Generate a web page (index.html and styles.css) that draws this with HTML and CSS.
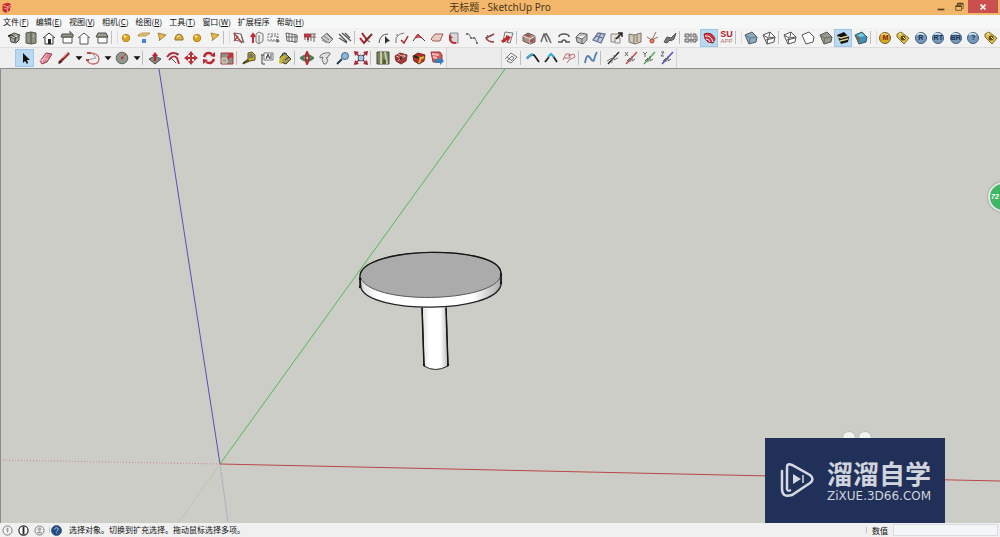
FILE: index.html
```html
<!DOCTYPE html>
<html lang="zh-CN">
<head>
<meta charset="utf-8">
<title>无标题 - SketchUp Pro</title>
<link rel="stylesheet" href="styles.css">
</head>
<body>
<svg class="defs" aria-hidden="true">
<symbol id="iso" viewBox="0 0 14 14"><path d="M1 5l6-3 6 2-5 4zM3 6l1 5 5 1 3-3V5" fill="#a5aa9a" stroke="#44483e"/><path d="M1 5l4-1 4 3M8 8v3" stroke="#222" fill="none"/></symbol>
<symbol id="topv" viewBox="0 0 14 14"><path d="M2 2l5-1 5 1v10l-5 1-5-1z" fill="#8f9585" stroke="#55594d"/><path d="M7 1v12" stroke="#4d5147"/><path d="M9 5h1" stroke="#eee"/></symbol>
<symbol id="front" viewBox="0 0 14 14"><path d="M1 7l6-5 6 5M3 6v7h8V6" fill="#fff" stroke="#333"/><path d="M6 8h3v5H6z" fill="#222"/></symbol>
<symbol id="right" viewBox="0 0 14 14"><path d="M3 6h9v6H3z" fill="#fff" stroke="#555"/><path d="M2 3h11v3H1z" fill="#969b8e" stroke="#4b4f46"/><path d="M9 1h2v2" stroke="#444" fill="none"/></symbol>
<symbol id="back" viewBox="0 0 14 14"><path d="M1 7l6-5 6 5M3 6v7h8V6" fill="#fff" stroke="#555"/></symbol>
<symbol id="left" viewBox="0 0 14 14"><path d="M3 6h9v6H3z" fill="#fff" stroke="#555"/><path d="M3 2h8l2 4H1z" fill="#989d90" stroke="#4b4f46"/></symbol>
<symbol id="ball" viewBox="0 0 14 14"><circle cx="7" cy="7" r="3.700" fill="#dca526" stroke="#ba8519"/><circle cx="6" cy="5.500" r="1.300" fill="#ffeaa0"/></symbol>
<symbol id="plane" viewBox="0 0 14 14"><path d="M1 4l4-2h8l-4 3H1z" fill="#dec176" stroke="#ba9c4e"/><path d="M5 8h4v4H5z" fill="#4c7eda"/></symbol>
<symbol id="spot" viewBox="0 0 14 14"><path d="M3 2l8 2-6 5z" fill="#e4b954" stroke="#ad8532"/><path d="M5 8l-1 2" stroke="#a98332"/></symbol>
<symbol id="dome" viewBox="0 0 14 14"><path d="M3 9V7q1-4 4-4t4 4v2z" fill="#d9ae45" stroke="#907029"/><path d="M5 6q1-2 3-1" stroke="#fff0b4" fill="none"/></symbol>
<symbol id="red1" viewBox="0 0 14 14"><path d="M2 2l7 1 2 8-8-2zM9 3l3 9" fill="none" stroke="#666"/><path d="M2 2l8 10M2 10l4-5" stroke="#b34444" stroke-width="1.500"/></symbol>
<symbol id="red2" viewBox="0 0 14 14"><path d="M6 3l3-2 4 2v7l-4 3-3-2zM9 4v8" fill="#eee" stroke="#777"/><path d="M3 12V4M1 6l2-3 2 3" stroke="#bc2a32" stroke-width="2" fill="none"/></symbol>
<symbol id="tile" viewBox="0 0 14 14"><path d="M1 3h10v7H1zM4 5h6v4H4z" fill="none" stroke="#777" stroke-dasharray="2 1"/><path d="M9 8l4 2-3 2z" fill="#666"/></symbol>
<symbol id="bars" viewBox="0 0 14 14"><path d="M1 2l11 2v7L2 10zM4 3v7M7 3v7M10 4v8M1 6h12" fill="none" stroke="#666"/></symbol>
<symbol id="rbars" viewBox="0 0 14 14"><path d="M1 3h12M2 3v6M5 3v8M8 3v7M11 3v8M1 6h12" stroke="#666"/><path d="M1 3h7v3H1zM4 6h2v3H4z" fill="#bd343c"/></symbol>
<symbol id="slats" viewBox="0 0 14 14"><path d="M1 7l6-5 6 6-4 4zM2 9l5 3M4 5l5 4M7 3l5 5" fill="#ccc" stroke="#777"/></symbol>
<symbol id="slats2" viewBox="0 0 14 14"><path d="M1 3l8 8M4 2l9 8M1 7l8 5M7 2l5 5" stroke="#555" stroke-width="1.300"/></symbol>
<symbol id="cut" viewBox="0 0 14 14"><path d="M3 2l5 7M1 7l4 5 8-9" stroke="#a52226" stroke-width="2" fill="none"/><path d="M6 9l7-6M8 9l3 2" stroke="#444"/></symbol>
<symbol id="curve" viewBox="0 0 14 14"><path d="M2 12Q3 3 11 3" stroke="#555" fill="none"/><path d="M8 5l5 5-3 1-2 2z" fill="#333"/></symbol>
<symbol id="fillet" viewBox="0 0 14 14"><path d="M1 12V7q3-5 8-5M1 4h2" stroke="#777" fill="none"/><path d="M6 9l3 3 4-7" stroke="#a7252b" fill="none" stroke-width="1.500"/></symbol>
<symbol id="roof" viewBox="0 0 14 14"><path d="M1 10l5-7 7 7" stroke="#333" fill="none"/><path d="M3 7l3-4 4 4-3-1z" fill="#d65461" stroke="#b22f3b"/></symbol>
<symbol id="face" viewBox="0 0 14 14"><path d="M1 8l4-5h8l-3 7H3z" fill="#e5cdc4" stroke="#a35b57"/></symbol>
<symbol id="push2" viewBox="0 0 14 14"><path d="M3 2h8v10H5z" fill="#d7d7d7" stroke="#888"/><path d="M2 3l4 4H4v2q1 2 5 2v2q-7 0-7-5z" fill="#c72d36"/></symbol>
<symbol id="chain" viewBox="0 0 14 14"><path d="M1 3h3l2 4h4l2 5" stroke="#777" fill="none"/><path d="M1 2h2v2H1zM5 6h2v2H5zM8 6h2v2H8zM11 11h2v2h-2z" fill="#777"/></symbol>
<symbol id="anglei" viewBox="0 0 14 14"><path d="M11 3L3 7q2 4 8 4" stroke="#9d3438" fill="none" stroke-width="1.500"/><path d="M3 7l2-3" stroke="#555"/></symbol>
<symbol id="redsheet" viewBox="0 0 14 14"><path d="M5 1l8 1-3 10-7-2z" fill="#eee" stroke="#777"/><path d="M1 10l5-4V4l5 2-4 6V9l-4 3z" fill="#c12a2c"/></symbol>
<symbol id="box" viewBox="0 0 14 14"><path d="M1 5l5-3 7 3v6l-5 2-7-3z" fill="#a99083" stroke="#635b53"/><path d="M1 5l7 3 5-3M8 8v5" stroke="#ddd" fill="none"/><path d="M8 9l4-2v3l-4 2zM3 4l4-1 2 2-3 1z" fill="#aa4c46"/></symbol>
<symbol id="legs" viewBox="0 0 14 14"><path d="M2 11l3-8 3 1 4 8M5 3l3 8M7 2l4 7" fill="none" stroke="#696969" stroke-width="1.500"/></symbol>
<symbol id="arch" viewBox="0 0 14 14"><path d="M2 6q0-3 5-3t5 3M1 11h4q0-2 2-2t2 2h4" fill="none" stroke="#555" stroke-width="1.500"/></symbol>
<symbol id="hex" viewBox="0 0 14 14"><path d="M1 6l4-4 7 1v6l-4 4-6-2zM1 6l6 2 5-4M7 8v5" fill="#bbb" stroke="#666"/></symbol>
<symbol id="sheets" viewBox="0 0 14 14"><path d="M1 9l5-7 7 1-4 9zM4 5l7 2M9 2l-4 9" fill="#c3cbdf" stroke="#657392" stroke-width="1.300"/></symbol>
<symbol id="export" viewBox="0 0 14 14"><path d="M1 3h8v8H1z" fill="#e9e2d5" stroke="#888"/><path d="M5 7h5v5H5z" fill="#eee" stroke="#888"/><path d="M6 8l6-6M8 2h4v4" stroke="#222" stroke-width="1.500" fill="none"/></symbol>
<symbol id="book" viewBox="0 0 14 14"><path d="M1 3l5 1 7-2v9l-6 2-6-2zM6 4v8M9 4v7" fill="#d2c8b5" stroke="#77736a"/></symbol>
<symbol id="joint" viewBox="0 0 14 14"><path d="M2 6l5 3 4-8M7 9l6-3" stroke="#95715c" fill="none"/><circle cx="7" cy="10" r="2" fill="#ec8060" stroke="#a64631"/></symbol>
<symbol id="feather" viewBox="0 0 14 14"><path d="M1 11l3-5 4 1 5-5-2 6-3 2-1-1-3 3z" fill="#777" stroke="#555"/></symbol>
<symbol id="gear3" viewBox="0 0 14 14"><path d="M1 3h4v3H1zM1 8h4v3H1zM7 2v10M9 3h3v3H9zM9 8h3v3H9zM5 4h2M5 9h4M13 5v5" stroke="#666" fill="#ccc"/></symbol>
<symbol id="wifi" viewBox="0 0 14 14"><path d="M2 3q8-3 11 5l-2 4-5-1Q2 8 2 3z" fill="#d32e3c" stroke="#912530"/><path d="M3 5q6-1 8 6M4 8q3 0 4 3" stroke="#fff" fill="none"/></symbol>
<symbol id="cube" viewBox="0 0 14 14"><path d="M1 4l7-3 5 5-1 5-7 2z" fill="#8caabd" stroke="#4c5960"/><path d="M1 4l5 3 7-1M6 7l-1 6" stroke="#5e7a8b" fill="none"/></symbol>
<symbol id="wire" viewBox="0 0 14 14"><path d="M1 4l7-3 5 5-1 5-7 2zM1 4l5 3 7-1M6 7l-1 6M8 1l-1 5M4 9l8-2" fill="#fff" stroke="#555"/></symbol>
<symbol id="white" viewBox="0 0 14 14"><path d="M1 4l7-3 5 5-1 5-7 2z" fill="#fff" stroke="#555"/></symbol>
<symbol id="shade" viewBox="0 0 14 14"><path d="M1 4l7-3 5 5-1 5-7 2z" fill="#99998b" stroke="#555"/><path d="M1 4l5 3 7-1M6 7l-1 6" stroke="#706f60" fill="none"/></symbol>
<symbol id="stripe" viewBox="0 0 14 14"><path d="M1 4l7-3 5 5-1 5-7 2z" fill="#111"/><path d="M2 6l3 1 7-2M4 10l8-2" stroke="#d8cf8b" stroke-width="1.500" fill="none"/></symbol>
<symbol id="multi" viewBox="0 0 14 14"><path d="M1 4l7-3 5 5-1 5-7 2z" fill="#3d92b7" stroke="#44565e"/><path d="M1 4l5 3-1 6z" fill="#746c57"/><path d="M3 4l5-2 3 3-5 1z" fill="#76c8e0"/></symbol>
<symbol id="gold" viewBox="0 0 14 14"><circle cx="7" cy="7" r="5.500" fill="#d4aa28" stroke="#79601c"/><path d="M3 4q3-3 7 0" stroke="#fff09b" fill="none"/></symbol>
<symbol id="tag" viewBox="0 0 14 14"><path d="M1 3l4-2 8 6-5 6-7-7z" fill="#dcbc4e" stroke="#86712d"/><circle cx="7" cy="7" r="2.500" fill="#684b10"/><path d="M3 3h2M7 6l2 2" stroke="#fff"/></symbol>
<symbol id="blue" viewBox="0 0 14 14"><circle cx="7" cy="7" r="5.500" fill="#7799bb" stroke="#415f7e"/><path d="M3 4q3-3 7 0" stroke="#dcecf6" fill="none" stroke-width="1.500"/></symbol>
<symbol id="select" viewBox="0 0 14 14"><path d="M5 2v10l2-2 2 3 1-1-1-3h3z" fill="#111"/></symbol>
<symbol id="eraser" viewBox="0 0 14 14"><path d="M1 10l6-8 6 1-5 8-5 2z" fill="#df8290" stroke="#8c4251"/><path d="M3 12l1-4 4-5M1 10l3-2 5 0" stroke="#fac4ca" fill="none"/></symbol>
<symbol id="pencil" viewBox="0 0 14 14"><path d="M2 12L12 2" stroke="#922d27" stroke-width="2.500"/><path d="M1 13l2-4 2 2z" fill="#322"/><path d="M6 7l5-5" stroke="#df7f6c"/></symbol>
<symbol id="arc" viewBox="0 0 14 14"><path d="M3 2q10 0 10 6 0 5-6 5-4 0-6-4" fill="none" stroke="#c16765" stroke-width="1.300"/><path d="M1 9l9-2M7 3l3 4" stroke="#999"/><path d="M0 9h3M1 2h4" stroke="#b74b45" stroke-width="2"/></symbol>
<symbol id="circle" viewBox="0 0 14 14"><circle cx="7" cy="7" r="5.800" fill="#92968b" stroke="#62655c"/><path d="M7 7l4-4" stroke="#bd3e3a"/><circle cx="7" cy="7" r="1.200" fill="#a83434"/></symbol>
<symbol id="down" viewBox="0 0 14 14"><path d="M1 4h12L7 11z" fill="#111"/></symbol>
<symbol id="push" viewBox="0 0 14 14"><path d="M1 8l6-3 6 3-6 5z" fill="#85887a" stroke="#4c4d46"/><path d="M7 1l3 4H8v5H6V5H4z" fill="#ba202e"/></symbol>
<symbol id="offset" viewBox="0 0 14 14"><path d="M1 6Q6-1 12 4M3 9q4-6 8-2l2 6" fill="none" stroke="#b12733" stroke-width="1.800"/><path d="M4 6l6 6M10 2l3 1" stroke="#555"/></symbol>
<symbol id="move" viewBox="0 0 14 14"><path d="M7 0l3 4H8v2h2V4l4 3-4 3V8H8v2h2l-3 4-3-4h2V8H4v2L0 7l4-3v2h2V4H4z" fill="#b92f38"/></symbol>
<symbol id="rotate" viewBox="0 0 14 14"><path d="M2 6q2-6 8-3M12 8q-2 6-8 3" fill="none" stroke="#ba2630" stroke-width="2.500"/><path d="M8 5l5 1V1zM6 9l-5-1v5z" fill="#ba2630"/></symbol>
<symbol id="scale" viewBox="0 0 14 14"><path d="M1 2h12v11H1z" fill="#918f83" stroke="#aa3439"/><path d="M7 2h6v6l-2-2-3 3-2-2 3-3z" fill="#bd3438"/><path d="M2 7h5v5H2z" fill="#aaa99f" stroke="#d9d7cd"/></symbol>
<symbol id="tape" viewBox="0 0 14 14"><path d="M1 12l5-4V2l4-1 3 3v5l-5 1-7 3z" fill="#caae2b" stroke="#5b5328"/><circle cx="9" cy="5" r="2.500" fill="#777965"/><path d="M1 12l6-3" stroke="#242424"/></symbol>
<symbol id="text" viewBox="0 0 14 14"><path d="M4 2h9v7H4z" fill="#fff" stroke="#777"/><path d="M2 4v9h3M1 4h3M6 8l2-5 2 5M6 6h3M11 3v5" fill="none" stroke="#444"/></symbol>
<symbol id="paint" viewBox="0 0 14 14"><path d="M2 6l5-4 6 6-5 5-5-2z" fill="#a39b59" stroke="#424127"/><path d="M1 12q0-8 7-7l-3 3-1 5z" fill="#c8b729"/><path d="M4 5q0-5 5-2M7 9l4-3" fill="none" stroke="#333"/></symbol>
<symbol id="orbit" viewBox="0 0 14 14"><path d="M1 7q6-5 12 0-6 5-12 0z" fill="none" stroke="#3d8356" stroke-width="2.500"/><path d="M7 1q-3 6 0 12Q11 7 7 1z" fill="none" stroke="#b32e34" stroke-width="2"/></symbol>
<symbol id="hand" viewBox="0 0 14 14"><path d="M2 5q3-4 10-3 1 2-2 3 1 2-2 2l2 2-2 4H6L4 9l1-3-3 1z" fill="#e4e2dc" stroke="#777"/></symbol>
<symbol id="zoom" viewBox="0 0 14 14"><circle cx="9" cy="5" r="3.500" fill="#8eb8d7" stroke="#476580"/><path d="M6 8l-5 5" stroke="#253c52" stroke-width="2"/></symbol>
<symbol id="extents" viewBox="0 0 14 14"><circle cx="7" cy="7" r="3" fill="#9ec4de" stroke="#50667b"/><path d="M0 0l5 1-4 4zM14 0L9 1l4 4zM0 14l5-1-4-4zM14 14l-5-1 4-4z" fill="#b02737"/><path d="M1 1l4 4M13 1L9 5M1 13l4-4M13 13L9 9" stroke="#902a3a" stroke-width="1.500"/></symbol>
<symbol id="map" viewBox="0 0 14 14"><path d="M1 1h12v12H1z" fill="#79825b" stroke="#454a37"/><path d="M5 1v12M9 1l2 12" stroke="#c7c9a4" stroke-width="2"/><path d="M7 8l3 1v4H7z" fill="#4e613d"/></symbol>
<symbol id="ware" viewBox="0 0 14 14"><path d="M1 5l5-3 7 2-1 6-5 3-5-3z" fill="#aa3739" stroke="#7d322f"/><path d="M2 5l5 2 5-2M4 3l4 2 3-1M4 10l2-2" stroke="#dcb7a8" fill="none"/><circle cx="7" cy="7" r="1.500" fill="#333"/></symbol>
<symbol id="ware2" viewBox="0 0 14 14"><path d="M1 5l5-3 7 2-1 6-5 3-5-3z" fill="#b42c2c" stroke="#792a23"/><path d="M4 6l5 1-2 5M8 8l4-2" stroke="#deb92d" stroke-width="2" fill="none"/><path d="M2 5l5 2" stroke="#222" stroke-width="2"/></symbol>
<symbol id="send" viewBox="0 0 14 14"><path d="M1 1h9l2 3v7H3z" fill="#d55759" stroke="#a3363b"/><path d="M2 3l7 1M3 6l4 1" stroke="#f4c3bd" stroke-width="2"/><path d="M5 8h5V6l4 4-4 4v-2H5z" fill="#377fba"/></symbol>
<symbol id="swirl" viewBox="0 0 14 14"><path d="M1 8l6-6 6 4-6 6-4-2 5-5 2 2-3 3M3 6l4 3" fill="none" stroke="#777"/></symbol>
<symbol id="bend" viewBox="0 0 14 14"><path d="M1 7q4-4 7-3l5 7" fill="none" stroke="#222" stroke-width="1.800"/><path d="M1 8q2-4 6-5" fill="none" stroke="#3daac4" stroke-width="2"/></symbol>
<symbol id="bend2" viewBox="0 0 14 14"><path d="M1 11l4-5M9 5l4 6" stroke="#222" stroke-width="1.800"/><path d="M4 6l3-3 3 3" fill="none" stroke="#39a8cb" stroke-width="2"/></symbol>
<symbol id="loop" viewBox="0 0 14 14"><path d="M1 9l3-6h4v4H2M6 5l6-2 1 3-6 3-2 3" fill="none" stroke="#b66f72"/></symbol>
<symbol id="bez" viewBox="0 0 14 14"><path d="M1 12q1-7 3-7 1 0 3 3t3 1q1-5 3-8" fill="none" stroke="#517eb7" stroke-width="1.800"/></symbol>
<symbol id="axis" viewBox="0 0 14 14"><path d="M2 13L13 1" stroke="currentColor" stroke-width="1.500"/><path d="M1 10l5-3v5M8 4v5l4-2" fill="none" stroke="#777"/></symbol>
<symbol id="axisx" viewBox="0 0 14 14"><path d="M2 13L13 1" stroke="currentColor" stroke-width="1.500"/><path d="M1 1l3 4M4 1L1 5M3 10l3-3v4M8 5v5l3-2" fill="none" stroke="#666"/></symbol>
<symbol id="axisy" viewBox="0 0 14 14"><path d="M2 13L13 1" stroke="currentColor" stroke-width="1.500"/><path d="M1 1l2 2 2-2M3 3v3M3 10l3-3v4M8 5v5l3-2" fill="none" stroke="#666"/></symbol>
<symbol id="axisz" viewBox="0 0 14 14"><path d="M2 13L13 1" stroke="currentColor" stroke-width="1.500"/><path d="M1 1h3L1 5h3M3 10l3-3v4M8 5v5l3-2" fill="none" stroke="#666"/></symbol>
</svg>

<header class="titlebar">
  <svg class="logo" viewBox="0 0 14 14" aria-hidden="true"><path d="M2 3l7-2 4 2-2 8-5 3-4-3z" fill="#c9252c"/><path d="M2 4l6 2 5-2M4 8l4 1v4M8 6v2l3-1" fill="none" stroke="#f3c1a4"/></svg>
  <h1 class="title">无标题 - SketchUp Pro</h1>
  <div class="winbtns">
    <button class="win" aria-label="最小化"><svg viewBox="0 0 12 12"><path d="M2 9h8" stroke="#55401f" stroke-width="2"/></svg></button>
    <button class="win" aria-label="还原"><svg viewBox="0 0 12 12"><path d="M2 5h7v5H2zM4 4V2h7v6h-1" fill="none" stroke="#6b4f26"/><path d="M2 5h7M4 2h7" stroke="#55401f" stroke-width="2"/></svg></button>
    <button class="win close" aria-label="关闭"><svg viewBox="0 0 12 12"><path d="M3 3l6 6M9 3l-6 6" stroke="#fff" stroke-width="2"/></svg></button>
  </div>
</header>

<nav class="menubar">
  <button>文件(<u>F</u>)</button><button>编辑(<u>E</u>)</button><button>视图(<u>V</u>)</button><button>相机(<u>C</u>)</button><button>绘图(<u>R</u>)</button><button>工具(<u>T</u>)</button><button>窗口(<u>W</u>)</button><button>扩展程序</button><button>帮助(<u>H</u>)</button>
</nav>

<div class="toolbar wide" role="toolbar" aria-label="视图与插件">
  <button aria-label="等轴"><svg><use href="#iso"/></svg></button>
  <button aria-label="俯视"><svg><use href="#topv"/></svg></button>
  <button aria-label="前视"><svg><use href="#front"/></svg></button>
  <button aria-label="右视"><svg><use href="#right"/></svg></button>
  <button aria-label="后视"><svg><use href="#back"/></svg></button>
  <button aria-label="左视"><svg><use href="#left"/></svg></button>
  <i class="sep group"></i>
  <button aria-label="点光源"><svg><use href="#ball"/></svg></button>
  <button aria-label="面光源"><svg><use href="#plane"/></svg></button>
  <button aria-label="聚光灯"><svg><use href="#spot"/></svg></button>
  <button aria-label="穹顶光"><svg><use href="#dome"/></svg></button>
  <button aria-label="球光源"><svg><use href="#ball"/></svg></button>
  <button aria-label="光域网"><svg><use href="#spot"/></svg></button>
  <i class="sep group"></i>
  <button aria-label="翻转面"><svg><use href="#red1"/></svg></button>
  <button aria-label="拉伸"><svg><use href="#red2"/></svg></button>
  <button aria-label="选框"><svg><use href="#tile"/></svg></button>
  <button aria-label="网格"><svg><use href="#bars"/></svg></button>
  <button aria-label="栅栏"><svg><use href="#rbars"/></svg></button>
  <button aria-label="板条"><svg><use href="#slats"/></svg></button>
  <button aria-label="斜线"><svg><use href="#slats2"/></svg></button>
  <i class="sep"></i>
  <button aria-label="修剪"><svg><use href="#cut"/></svg></button>
  <button aria-label="曲线选择"><svg><use href="#curve"/></svg></button>
  <button aria-label="圆角"><svg><use href="#fillet"/></svg></button>
  <button aria-label="屋顶"><svg><use href="#roof"/></svg></button>
  <button aria-label="封面"><svg><use href="#face"/></svg></button>
  <button aria-label="推面"><svg><use href="#push2"/></svg></button>
  <button aria-label="路径"><svg><use href="#chain"/></svg></button>
  <button aria-label="角度"><svg><use href="#anglei"/></svg></button>
  <button aria-label="红页"><svg><use href="#redsheet"/></svg></button>
  <i class="sep"></i>
  <button aria-label="方块"><svg><use href="#box"/></svg></button>
  <button aria-label="支架"><svg><use href="#legs"/></svg></button>
  <button aria-label="拱"><svg><use href="#arch"/></svg></button>
  <button aria-label="实体"><svg><use href="#hex"/></svg></button>
  <button aria-label="面片"><svg><use href="#sheets"/></svg></button>
  <button aria-label="导出"><svg><use href="#export"/></svg></button>
  <button aria-label="图册"><svg><use href="#book"/></svg></button>
  <button aria-label="节点"><svg><use href="#joint"/></svg></button>
  <button aria-label="羽毛"><svg><use href="#feather"/></svg></button>
  <i class="sep"></i>
  <button aria-label="设置"><svg><use href="#gear3"/></svg></button>
  <button class="on" aria-label="插件库"><svg><use href="#wifi"/></svg></button>
  <button aria-label="SUAPP"><span class="suapp"><b>SU</b><small>APP</small></span></button>
  <i class="sep group"></i>
  <button aria-label="X光透视"><svg><use href="#cube"/></svg></button>
  <button aria-label="后边线"><svg><use href="#wire"/></svg></button>
  <i class="sep"></i>
  <button aria-label="线框"><svg><use href="#wire"/></svg></button>
  <button aria-label="消隐"><svg><use href="#white"/></svg></button>
  <button aria-label="阴影"><svg><use href="#shade"/></svg></button>
  <button class="on" aria-label="材质贴图"><svg><use href="#stripe"/></svg></button>
  <button aria-label="单色"><svg><use href="#multi"/></svg></button>
  <i class="sep group"></i>
  <button class="coin m"><svg aria-hidden="true"><use href="#gold"/></svg><span>M</span></button>
  <button aria-label="选项"><svg><use href="#tag"/></svg></button>
  <button class="coin"><svg aria-hidden="true"><use href="#blue"/></svg><span>R</span></button>
  <button class="coin"><svg aria-hidden="true"><use href="#blue"/></svg><span>RT</span></button>
  <button class="coin"><svg aria-hidden="true"><use href="#blue"/></svg><span>BR</span></button>
  <button class="coin"><svg aria-hidden="true"><use href="#blue"/></svg><span>?</span></button>
  <button aria-label="标签"><svg><use href="#tag"/></svg></button>
</div>

<div class="toolbar tools" role="toolbar" aria-label="工具">
  <button class="on first" aria-label="选择"><svg><use href="#select"/></svg></button>
  <button aria-label="擦除"><svg><use href="#eraser"/></svg></button>
  <button aria-label="直线"><svg><use href="#pencil"/></svg></button>
  <button class="drop" aria-label="更多直线工具"><svg><use href="#down"/></svg></button>
  <button aria-label="圆弧"><svg><use href="#arc"/></svg></button>
  <button class="drop" aria-label="更多圆弧工具"><svg><use href="#down"/></svg></button>
  <button aria-label="圆"><svg><use href="#circle"/></svg></button>
  <button class="drop" aria-label="更多形状"><svg><use href="#down"/></svg></button>
  <i class="sep"></i>
  <button aria-label="推拉"><svg><use href="#push"/></svg></button>
  <button aria-label="偏移"><svg><use href="#offset"/></svg></button>
  <button aria-label="移动"><svg><use href="#move"/></svg></button>
  <button aria-label="旋转"><svg><use href="#rotate"/></svg></button>
  <button aria-label="缩放"><svg><use href="#scale"/></svg></button>
  <i class="sep"></i>
  <button aria-label="卷尺"><svg><use href="#tape"/></svg></button>
  <button aria-label="文字"><svg><use href="#text"/></svg></button>
  <button aria-label="材质"><svg><use href="#paint"/></svg></button>
  <i class="sep"></i>
  <button aria-label="环绕观察"><svg><use href="#orbit"/></svg></button>
  <button aria-label="平移"><svg><use href="#hand"/></svg></button>
  <button aria-label="视图缩放"><svg><use href="#zoom"/></svg></button>
  <button aria-label="充满视窗"><svg><use href="#extents"/></svg></button>
  <i class="sep"></i>
  <button aria-label="添加位置"><svg><use href="#map"/></svg></button>
  <button aria-label="模型库"><svg><use href="#ware"/></svg></button>
  <button aria-label="扩展库"><svg><use href="#ware2"/></svg></button>
  <button aria-label="发送到LayOut"><svg><use href="#send"/></svg></button>
  <i class="space"></i>
  <button aria-label="螺旋"><svg><use href="#swirl"/></svg></button>
  <i class="sep"></i>
  <button aria-label="弯曲"><svg><use href="#bend"/></svg></button>
  <button aria-label="拱形弯曲"><svg><use href="#bend2"/></svg></button>
  <button aria-label="环线"><svg><use href="#loop"/></svg></button>
  <i class="sep"></i>
  <button aria-label="贝兹曲线"><svg><use href="#bez"/></svg></button>
  <i class="sep"></i>
  <button class="ax" aria-label="镜像"><svg><use href="#axis"/></svg></button>
  <button class="ax x" aria-label="X轴"><svg><use href="#axisx"/></svg></button>
  <button class="ax y" aria-label="Y轴"><svg><use href="#axisy"/></svg></button>
  <button class="ax z" aria-label="Z轴"><svg><use href="#axisz"/></svg></button>
  <i class="end"></i>
</div>

<main class="viewport">
  <svg class="scene" viewBox="1 69 999 454" preserveAspectRatio="xMinYMin slice" role="img" aria-label="圆桌模型">
    <defs>
      <linearGradient id="rim"><stop offset="0" stop-color="#d8d8d8"/><stop offset=".12" stop-color="#fff"/><stop offset=".8" stop-color="#fff"/><stop offset="1" stop-color="#aaa"/></linearGradient>
      <linearGradient id="leg"><stop offset="0" stop-color="#ddd"/><stop offset=".3" stop-color="#fff"/><stop offset=".7" stop-color="#fff"/><stop offset="1" stop-color="#bbb"/></linearGradient>
    </defs>
    <path d="M159 69L220 464" stroke="#5252b8"/>
    <path d="M505 69L220 464" stroke="#55b755"/>
    <path d="M220 464L1000 481" stroke="#b94848"/>
    <path d="M0 460L220 464" stroke="#c98a8a" stroke-dasharray="1 2"/>
    <path d="M220 464L179 522" stroke="#a3bca0" stroke-dasharray="1 1"/>
    <path d="M220 464L228 522" stroke="#9494bd" stroke-dasharray="1 1"/>
    <path d="M422 302L424 366Q435 373 448 366L446 302z" fill="url(#leg)" stroke="#222"/>
    <path d="M360 276L361 288C370 314 494 314 501 285L501 273" fill="url(#rim)" stroke="#222" stroke-width="1.300"/>
    <path d="M360 276C361 246 499 244 501 273C502 303 367 307 360 276z" fill="#ababab" stroke="#555"/>
    <path d="M360 276C361 246 499 244 501 273" fill="none" stroke="#161616" stroke-width="1.400"/>
    <path d="M360 277v10M501 273v11M422 308l2 58M446 308l2 58" stroke="#161616" stroke-width="1.500"/>
    <g fill="#161616"><circle cx="360" cy="279" r="1.200"/><circle cx="360" cy="287" r="1.200"/><circle cx="501" cy="275" r="1.200"/><circle cx="501" cy="283" r="1.200"/><circle cx="424" cy="365" r="1.200"/><circle cx="448" cy="365" r="1.200"/></g>
  </svg>
  <div class="ears" aria-hidden="true"><i></i><i></i></div>
  <section class="brand">
    <svg viewBox="0 0 36 38" aria-hidden="true"><path d="M8 27V5q0-4 5-2l18 10q5 4 0 8L13 33q-10 3-10-6V9" fill="none" stroke="#d5d9e1" stroke-width="2.500" stroke-linecap="round"/><path d="M8 27q0 3 4 1" fill="none" stroke="#d5d9e1" stroke-width="2"/><path d="M14 12l8 5-8 5z" fill="#d5d9e1"/><path d="M24 13v8" stroke="#d5d9e1" stroke-width="1.500"/></svg>
    <div class="brandtext"><strong>溜溜自学</strong><span>ZiXUE.3D66.COM</span></div>
  </section>
  <div class="ball">72</div>
</main>

<footer class="status">
  <button aria-label="地理位置"><svg viewBox="0 0 12 12"><circle cx="6" cy="6" r="5" fill="#f4f4f4" stroke="#777"/><path d="M5 3h2v3L6 9 5 6z" fill="#999"/></svg></button>
  <button aria-label="归属"><svg viewBox="0 0 12 12"><circle cx="6" cy="6" r="5" fill="#fff" stroke="#222" stroke-width="1.300"/><path d="M6 2v8M5 5h2" stroke="#222" stroke-width="2"/></svg></button>
  <button aria-label="登录"><svg viewBox="0 0 12 12"><circle cx="6" cy="6" r="5" fill="#eee" stroke="#777"/><circle cx="6" cy="4.500" r="2" fill="#aaa"/><path d="M3 9q3-4 6 0z" fill="#888"/></svg></button>
  <i class="bar"></i>
  <button class="help" aria-label="帮助"><svg viewBox="0 0 12 12"><circle cx="6" cy="6" r="5.300" fill="#24508a" stroke="#193a66"/><path d="M4 5q0-2 2-2t2 2L6 7M6 8v1" fill="none" stroke="#b8cce2"/></svg></button>
  <p>选择对象。切换到扩充选择。拖动鼠标选择多项。</p>
  <i class="bar"></i>
  <label for="measure">数值</label>
  <input id="measure" type="text">
</footer>
</body>
</html>
```
FILE: styles.css
```css
* { box-sizing: border-box; }
body {
  margin: 0;
  height: 100vh;
  display: flex;
  flex-direction: column;
  overflow: hidden;
  background: #f0f0f0;
  color: #111;
  font-family: "Noto Sans CJK SC", "Open Sans", sans-serif;
  font-size: 8px;
}
button {
  display: flex;
  align-items: center;
  justify-content: center;
  padding: 0;
  border: 0;
  background: none;
  color: inherit;
  font: inherit;
}
.defs { position: absolute; width: 0; height: 0; }
.defs symbol { fill: none; }

.titlebar {
  flex: none;
  display: grid;
  grid-template-columns: 1fr auto 1fr;
  align-items: center;
  height: 15px;
  background: #f3b76b;
}
.logo { width: 11px; height: 11px; margin-left: 1px; }
.title {
  margin: 0;
  font-family: "Noto Sans", "Noto Sans CJK SC", sans-serif;
  font-size: 10px;
  line-height: 15px;
  font-weight: 400;
  color: #4b3518;
}
.winbtns { display: flex; justify-content: flex-end; align-self: start; padding-right: 2px; }
.win { width: 18px; height: 13px; }
.win svg { width: 10px; height: 10px; }
.close { width: 30px; background: #c9504f; }

.menubar {
  flex: none;
  display: flex;
  gap: 7px;
  height: 13px;
  padding-left: 3px;
  background: #f6f7f7;
}
.menubar button { line-height: 13px; white-space: nowrap; }

.toolbar {
  flex: none;
  display: flex;
  align-items: center;
  height: 20px;
  background: #f3f3f3;
}
.toolbar button { flex: none; width: 18px; height: 18px; }
.toolbar svg { flex: none; width: 14px; height: 14px; }
.toolbar .on { background: #b9d8f2; box-shadow: inset 0 0 0 1px #9dc6e8; }
.sep { flex: none; align-self: stretch; width: 4px; margin: 3px 0; border-left: 1px solid #bdbdbd; }
.sep.group { width: 7px; border-right: 1px solid #dcdcdc; }
.wide { padding-left: 5px; border-bottom: 1px solid #dedede; }
.wide button { flex: 1 1 0; min-width: 0; }
.suapp { display: grid; justify-items: center; color: #b3262e; font-family: "Liberation Sans", sans-serif; line-height: 7px; }
.suapp b { font-size: 9px; }
.suapp small { font-size: 6px; line-height: 6px; color: #a86a6a; }
.coin { position: relative; }
.coin span {
  position: absolute;
  inset: 0;
  text-align: center;
  font: 700 7px/18px "Liberation Sans", sans-serif;
  color: #16304e;
}
.coin.m span { color: #8c2018; }

.tools { padding-left: 15px; background: #efefef; }
.tools .first { width: 19px; margin-right: 3px; }
.tools .drop { width: 11px; }
.tools .drop svg { width: 8px; height: 8px; }
.space { align-self: stretch; width: 56px; border: solid #d4d4d4; border-width: 0 1px; background: #ececec; }
.end { align-self: stretch; border-left: 1px solid #d4d4d4; }
.ax { color: #333; }
.ax.x { color: #c34c52; }
.ax.y { color: #4fae56; }
.ax.z { color: #4a4cc4; }

.viewport {
  position: relative;
  flex: 1;
  min-height: 0;
  overflow: hidden;
  background: #cdcdc8;
  border-top: 1px solid #8b8b8b;
  border-left: 1px solid #8b8b8b;
}
.scene { display: block; width: 100%; height: 100%; fill: none; }
.brand {
  position: absolute;
  right: 55px;
  bottom: 0;
  display: flex;
  align-items: center;
  gap: 12px;
  width: 180px;
  height: 85px;
  padding-left: 14px;
  background: #213058;
  color: #d0d4dc;
}
.brand svg { width: 36px; height: 38px; }
.brandtext { display: grid; }
.brandtext strong { font-size: 26px; line-height: 28px; font-weight: 700; padding-bottom: 2px; }
.brandtext span { font: 12px/14px "DejaVu Sans", sans-serif; }
.ears { position: absolute; right: 128px; bottom: 78px; display: flex; gap: 2px; }
.ears i { width: 14px; height: 14px; border-radius: 50%; background: #f1f3ee; border: 1px solid #b9bdb6; }
.ball {
  position: absolute;
  top: 113px;
  right: -18px;
  width: 30px;
  height: 30px;
  padding-left: 1px;
  border: 2px solid #e4eae2;
  border-radius: 50%;
  background: #3fb565;
  box-shadow: 0 0 2px #777;
  color: #fff;
  font: italic 700 7px/26px "Liberation Sans", sans-serif;
}

.status {
  flex: none;
  display: flex;
  align-items: center;
  height: 14px;
  padding: 0 2px 0 1px;
  background: #f0f0f0;
}
.status button { width: 12px; margin-right: 4px; }
.status svg { width: 11px; height: 11px; }
.status .help { width: 11px; margin: 0 7px 0 1px; }
.status p { margin: 0 auto 0 0; line-height: 14px; }
.bar { width: 1px; height: 6px; background: #c4c4c4; }
.status label { margin: 0 5px; }
.status input { width: 105px; height: 12px; padding: 0 2px; border: 1px solid #d5dce3; background: #f4f5f6; font: inherit; }
```
